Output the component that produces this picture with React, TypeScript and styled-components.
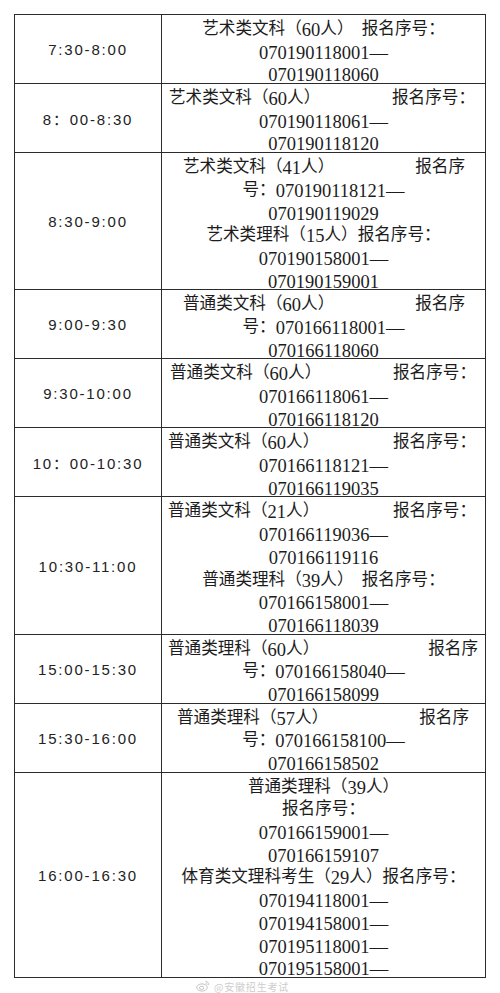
import React from 'react';
import styled, { createGlobalStyle } from 'styled-components';

const GlobalStyle = createGlobalStyle`
    html, body {
        margin: 0;
        padding: 0;
        background: #fff;
    }
`;

const LINE = 22.7;

const Sheet = styled.div`
    position: relative;
    padding: 14px 0 16px 14px;
    width: 500px;
    box-sizing: border-box;
`;

const Table = styled.table`
    border-collapse: collapse;
    width: 472px;
    table-layout: fixed;
    border: 1px solid #3a3a3a;
`;

const TimeCell = styled.td`
    width: 146px;
    padding: 1px 0 0;
    border: 1px solid #2b2b2b;
    text-align: center;
    vertical-align: middle;
    font-family: 'Liberation Sans', 'Noto Sans CJK SC', sans-serif;
    font-size: 15px;
    letter-spacing: 1.8px;
    color: #222;
    white-space: nowrap;
`;

const InfoCell = styled.td`
    padding: 0;
    border: 1px solid #2b2b2b;
    vertical-align: top;
    font-family: 'Noto Sans CJK SC', sans-serif;
    font-size: 16.6px;
    color: #1c1c1c;
`;

const Line = styled.div`
    height: ${LINE}px;
    line-height: ${LINE + 2}px;
    text-align: center;
    white-space: nowrap;
`;

const Spread = styled.div<{ $l: number; $r: number }>`
    display: flex;
    justify-content: space-between;
    height: ${LINE}px;
    line-height: ${LINE + 2}px;
    margin: 0 ${(p) => p.$r}px 0 ${(p) => p.$l}px;
    white-space: nowrap;
`;

const Num = styled.span`
    font-family: 'Liberation Serif', serif;
    font-size: 18.5px;
    vertical-align: -1.5px;
`;

const Watermark = styled.div`
    position: absolute;
    left: 196px;
    top: 980px;
    display: flex;
    align-items: center;
    gap: 4px;
    font-family: 'Noto Sans CJK SC', sans-serif;
    font-size: 10px;
    line-height: 11px;
    color: #cdcdcd;
    letter-spacing: 0.8px;
`;

type Wide = { a: string; b: string; l: number; r: number };
type Entry = string | Wide;
type Slot = { time: string; lines: Entry[] };

const slots: Slot[] = [
    {
        time: '7:30-8:00',
        lines: ['艺术类文科（60人）　报名序号：', '070190118001—', '070190118060'],
    },
    {
        time: '8：00-8:30',
        lines: [{ a: '艺术类文科（60人）', b: '报名序号：', l: 7, r: 10 }, '070190118061—', '070190118120'],
    },
    {
        time: '8:30-9:00',
        lines: [
            { a: '艺术类文科（41人）', b: '报名序', l: 21, r: 20 },
            '号：070190118121—',
            '070190119029',
            '艺术类理科（15人）报名序号：',
            '070190158001—',
            '070190159001',
        ],
    },
    {
        time: '9:00-9:30',
        lines: [{ a: '普通类文科（60人）', b: '报名序', l: 21, r: 20 }, '号：070166118001—', '070166118060'],
    },
    {
        time: '9:30-10:00',
        lines: [{ a: '普通类文科（60人）', b: '报名序号：', l: 8, r: 9 }, '070166118061—', '070166118120'],
    },
    {
        time: '10：00-10:30',
        lines: [{ a: '普通类文科（60人）', b: '报名序号：', l: 6, r: 9 }, '070166118121—', '070166119035'],
    },
    {
        time: '10:30-11:00',
        lines: [
            { a: '普通类文科（21人）', b: '报名序号：', l: 6, r: 9 },
            '070166119036—',
            '070166119116',
            '普通类理科（39人）　报名序号：',
            '070166158001—',
            '070166118039',
        ],
    },
    {
        time: '15:00-15:30',
        lines: [{ a: '普通类理科（60人）', b: '报名序', l: 6, r: 7 }, '号：070166158040—', '070166158099'],
    },
    {
        time: '15:30-16:00',
        lines: [{ a: '普通类理科（57人）', b: '报名序', l: 15, r: 16 }, '号：070166158100—', '070166158502'],
    },
    {
        time: '16:00-16:30',
        lines: [
            '普通类理科（39人）',
            '报名序号：',
            '070166159001—',
            '070166159107',
            '体育类文理科考生（29人）报名序号：',
            '070194118001—',
            '070194158001—',
            '070195118001—',
            '070195158001—',
        ],
    },
];

// digits and dashes are set in a serif face, a little larger than the Chinese text
const withNums = (text: string) =>
    text.split(/([\d—]+)/).map((part, i) => (/^[\d—]+$/.test(part) ? <Num key={i}>{part}</Num> : part));

const WeiboMark = () => (
    <svg width="14" height="12" viewBox="0 0 14 12" fill="none" stroke="#c4c4c4" strokeWidth="1">
        <ellipse cx="6" cy="7.5" rx="5.3" ry="3.6" />
        <ellipse cx="5.6" cy="7.8" rx="2.2" ry="1.6" />
        <path d="M9.5 1.5 C11.5 1.5 13 3 12.8 5" />
        <path d="M9.6 3.2 C10.6 3.2 11.3 3.9 11.2 4.8" />
    </svg>
);

const App = () => {
    return (
        <>
            <GlobalStyle />
            <Sheet>
                <Table>
                    <tbody>
                        {slots.map((slot) => (
                            <tr key={slot.time}>
                                <TimeCell>{slot.time}</TimeCell>
                                <InfoCell>
                                    {slot.lines.map((line, i) =>
                                        typeof line === 'string' ? (
                                            <Line key={i}>{withNums(line)}</Line>
                                        ) : (
                                            <Spread key={i} $l={line.l} $r={line.r}>
                                                <span>{withNums(line.a)}</span>
                                                <span>{line.b}</span>
                                            </Spread>
                                        )
                                    )}
                                </InfoCell>
                            </tr>
                        ))}
                    </tbody>
                </Table>
                <Watermark>
                    <WeiboMark />
                    <span>@安徽招生考试</span>
                </Watermark>
            </Sheet>
        </>
    );
};

export default App;
